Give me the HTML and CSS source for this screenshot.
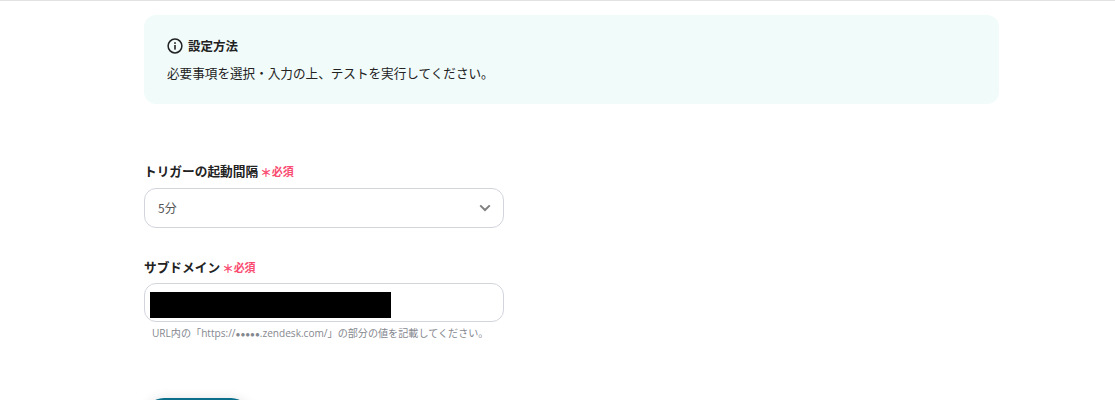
FILE: index.html
```html
<!DOCTYPE html>
<html lang="ja">
<head>
<meta charset="UTF-8">
<meta name="viewport" content="width=device-width, initial-scale=1.0">
<title>設定方法</title>
<link rel="stylesheet" href="styles.css">
</head>
<body>
    <div class="container">
        <div class="notice">
            <div class="notice-title">
                <svg class="info-icon" width="16" height="16" viewBox="0 0 16 16" fill="none">
                    <circle cx="8" cy="8" r="6.9" stroke="#222" stroke-width="1.5"/>
                    <rect x="7.2" y="7" width="1.6" height="4.6" fill="#222"/>
                    <rect x="7.2" y="4.2" width="1.6" height="1.7" fill="#222"/>
                </svg>
                <span>設定方法</span>
            </div>
            <p class="notice-text">必要事項を選択・入力の上、テストを実行してください。</p>
        </div>

        <div class="field field-first">
            <div class="label">トリガーの起動間隔<span class="required"><span class="star">＊</span>必須</span></div>
            <div class="select">
                <span class="select-value">5分</span>
                <svg width="12" height="8" viewBox="0 0 12 8" fill="none">
                    <path d="M1.2 1.4 L6 6 L10.8 1.4" stroke="#808080" stroke-width="2"/>
                </svg>
            </div>
        </div>

        <div class="field field-second">
            <div class="label">サブドメイン<span class="required"><span class="star">＊</span>必須</span></div>
            <div class="input">
                <div class="redacted"></div>
            </div>
            <p class="hint">URL内の「https://<span class="dots">●●●●●</span>.zendesk.com/」の部分の値を記載してください。</p>
        </div>

        <div class="button"></div>
    </div>
</body>
</html>
```

FILE: styles.css
```css
html, body {
    height: 400px;
    overflow: hidden;
}
body {
    font-family: "Noto Sans CJK JP", "Liberation Sans", sans-serif;
    background-color: #fff;
    color: #222;
    margin: 0;
    padding: 0;
    border-top: 1px solid #e2e2e2;
}
.container {
    width: 855px;
    margin-left: 144px;
    padding-top: 14px;
}
.notice {
    background-color: #f1fbfa;
    border-radius: 12px;
    height: 89px;
    padding: 22px 23px 0;
    box-sizing: border-box;
}
.notice-title {
    display: flex;
    align-items: center;
    gap: 5px;
    font-size: 12.5px;
    font-weight: 700;
    line-height: 18px;
}
.notice-text {
    margin: 9px 0 0;
    font-size: 12.6px;
    line-height: 18px;
}
.field {
    width: 360px;
}
.field-first {
    margin-top: 58px;
}
.field-second {
    margin-top: 30px;
}
.field-second .label {
    margin-bottom: 7px;
}
.label {
    font-size: 12.7px;
    font-weight: 700;
    line-height: 18px;
    display: flex;
    align-items: center;
    margin-bottom: 8px;
}
.required {
    display: flex;
    align-items: center;
    color: #fa4b70;
    font-size: 11px;
    margin-left: 2px;
}
.star {
    font-size: 11.5px;
    position: relative;
    top: 1px;
}
.select, .input {
    box-sizing: border-box;
    border: 1px solid #d3d5dc;
    border-radius: 12px;
    background-color: #fff;
}
.select {
    height: 40px;
    display: flex;
    align-items: center;
    justify-content: space-between;
    padding: 0 12px 0 13px;
    font-size: 12px;
    color: #555;
}
.select-value {
    padding-bottom: 2px;
}
.input {
    height: 39px;
    padding: 8px 5px;
}
.redacted {
    width: 241px;
    height: 26px;
    background-color: #000;
}
.hint {
    margin: 3px 0 0 8px;
    font-family: "Open Sans", "Noto Sans CJK JP", sans-serif;
    font-size: 10.1px;
    line-height: 16px;
    color: #85888f;
    white-space: nowrap;
}
.dots {
    font-family: "Liberation Sans", sans-serif;
    font-size: 8px;
}
.button {
    width: 107px;
    height: 40px;
    margin-top: 55px;
    background-color: #0b6f8c;
    border-radius: 20px;
    box-shadow: 0 0 12px rgba(0, 0, 0, 0.1);
}
```
